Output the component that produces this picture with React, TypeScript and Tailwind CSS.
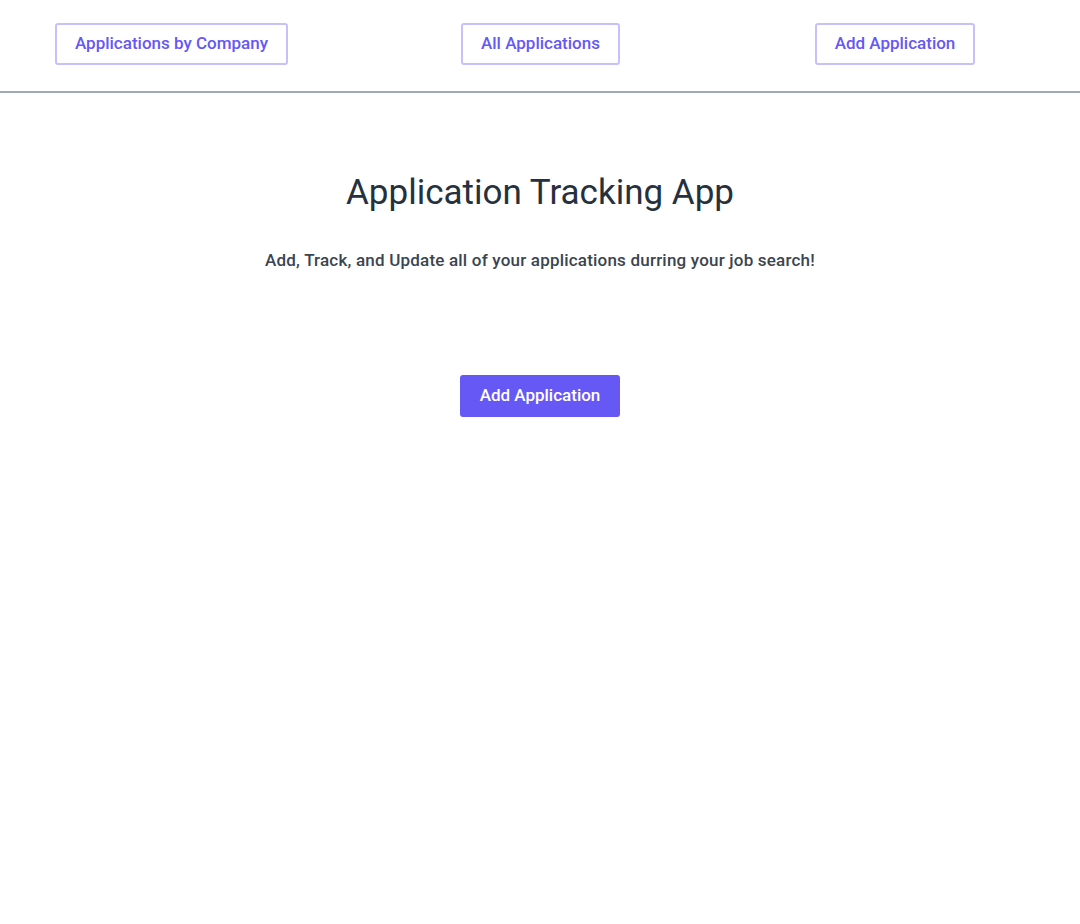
import React from 'react';

// Top navigation links
const navLinks = [
    { label: 'Applications by Company', width: 'w-[233px]' },
    { label: 'All Applications', width: 'w-[159px]' },
    { label: 'Add Application', width: 'w-[160px]' },
];

const NavBar: React.FC = () => (
    <nav className="h-[93px] border-b-2 border-[#9eabb6] pt-[23px] pl-[55px] flex items-start">
        <a href="#" className={`${navLinks[0].width} h-[42px] flex items-center justify-center rounded-[3px] border-2 border-[#c6c1fc] text-[#6558f5] text-[17px] font-medium`}>
            {navLinks[0].label}
        </a>
        <a href="#" className={`${navLinks[1].width} ml-[173px] h-[42px] flex items-center justify-center rounded-[3px] border-2 border-[#c6c1fc] text-[#6558f5] text-[17px] font-medium`}>
            {navLinks[1].label}
        </a>
        <a href="#" className={`${navLinks[2].width} ml-[195px] h-[42px] flex items-center justify-center rounded-[3px] border-2 border-[#c6c1fc] text-[#6558f5] text-[17px] font-medium`}>
            {navLinks[2].label}
        </a>
    </nav>
);

const App: React.FC = () => {
    return (
        <div className="min-h-screen bg-white font-['Roboto',sans-serif]">
            <NavBar />
            <main className="flex flex-col items-center pt-[79px]">
                <h1 className="text-[35px] leading-[42px] text-[#25313e] font-normal">Application Tracking App</h1>
                <p className="mt-[36px] text-[17px] leading-[20px] tracking-[0.2px] text-[#3a4550] font-medium">
                    Add, Track, and Update all of your applications durring your job search!
                </p>
                <button className="mt-[105px] w-[160px] h-[42px] rounded-[3px] bg-[#6558f5] text-white text-[17px] font-medium">
                    Add Application
                </button>
            </main>
        </div>
    );
};

export default App;
